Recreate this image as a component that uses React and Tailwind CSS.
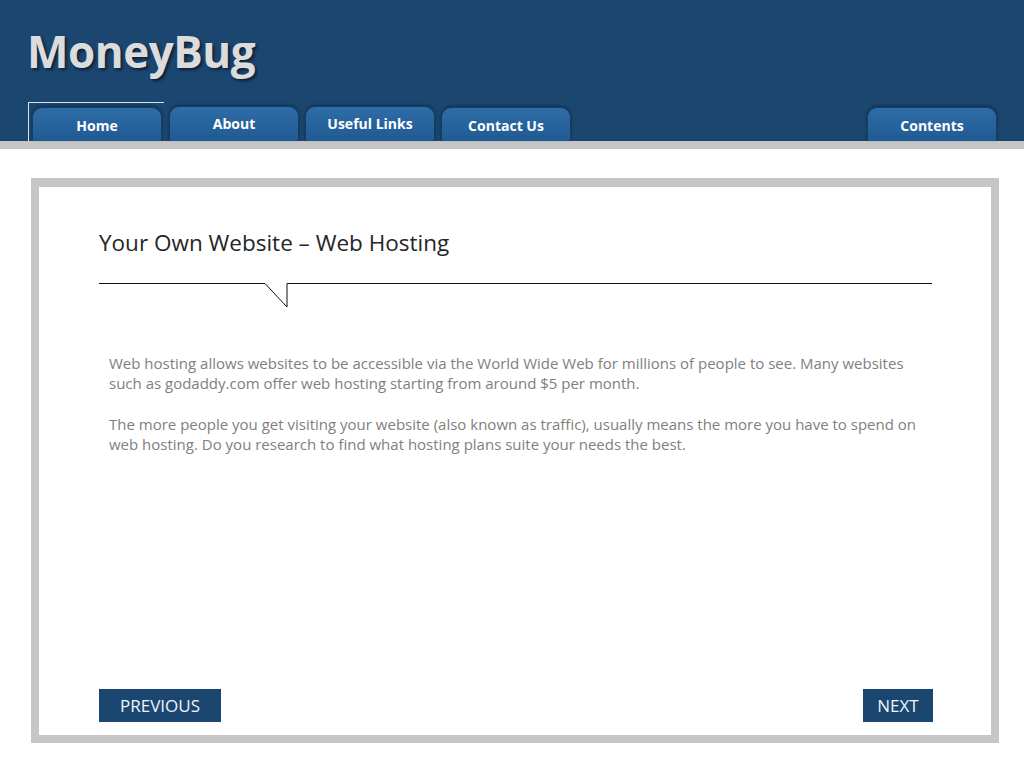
import React from 'react';

// Tab button in the header
const Tab = ({ label, className = '' }) => (
  <div
    className={`w-[130px] h-[34px] rounded-t-[10px] bg-gradient-to-b from-[#2f6da8] to-[#1f5a93] border border-[#163d63] border-b-0 shadow-[0_-1px_3px_rgba(0,0,0,0.35)] flex items-center justify-center text-white font-bold text-[14px] ${className}`}
  >
    {label}
  </div>
);

export default function App() {
  return (
    <div className="w-[1024px] h-[768px] bg-white overflow-hidden font-['Open_Sans',sans-serif]">
      {/* Header */}
      <div className="h-[141px] bg-[#1b4670] flex flex-col">
        <h1 className="pl-[27px] pt-[22px] text-[44px] leading-[58px] font-bold text-[#dcdcdc] tracking-[-0.5px] [text-shadow:2px_2px_3px_rgba(0,0,0,0.55)]">
          MoneyBug
        </h1>
        <div className="mt-auto flex items-end pl-[28px] pr-[27px]">
          <div className="w-[136px] h-[39px] border-t border-l border-[#d6e2ee] flex items-end pl-[3px]">
            <Tab label="Home" className="pt-[2px]" />
          </div>
          <Tab label="About" className="ml-[5px] h-[35px] pb-[2px]" />
          <Tab label="Useful Links" className="ml-[6px] h-[35px] pb-[2px]" />
          <Tab label="Contact Us" className="ml-[6px] pt-[2px]" />
          <Tab label="Contents" className="ml-auto pt-[2px]" />
        </div>
      </div>
      <div className="h-[8px] bg-[#c6c6c6]" />

      {/* Main frame */}
      <div className="mt-[29px] ml-[31px] w-[968px] h-[565px] border-[8px] border-t-[9px] border-[#c6c6c6] flex flex-col pl-[60px] pr-[58px] pb-[13px]">
        <h2 className="mt-[40px] text-[22.5px] leading-[32px] text-[#262626]">
          Your Own Website – Web Hosting
        </h2>
        <svg className="mt-[24px] block" width="833" height="26" viewBox="0 0 833 26">
          <path d="M0 0.5 H166 L188 24 V0.5 H833" fill="none" stroke="#111" strokeWidth="1" />
        </svg>
        <div className="mt-[44px] pl-[10px] text-[15px] leading-[20px] text-[#808080]">
          <p>
            Web hosting allows websites to be accessible via the World Wide Web for millions of people to see. Many websites such as godaddy.com offer web hosting starting from around $5 per month.
          </p>
          <p className="mt-[21px]">
            The more people you get visiting your website (also known as traffic), usually means the more you have to spend on web hosting. Do you research to find what hosting plans suite your needs the best.
          </p>
        </div>
        <div className="mt-auto flex justify-between">
          <button className="w-[122px] h-[33px] bg-[#1b4670] text-[#eef4fa] text-[17px]">PREVIOUS</button>
          <button className="w-[70px] h-[33px] bg-[#1b4670] text-[#eef4fa] text-[17px]">NEXT</button>
        </div>
      </div>
    </div>
  );
}
